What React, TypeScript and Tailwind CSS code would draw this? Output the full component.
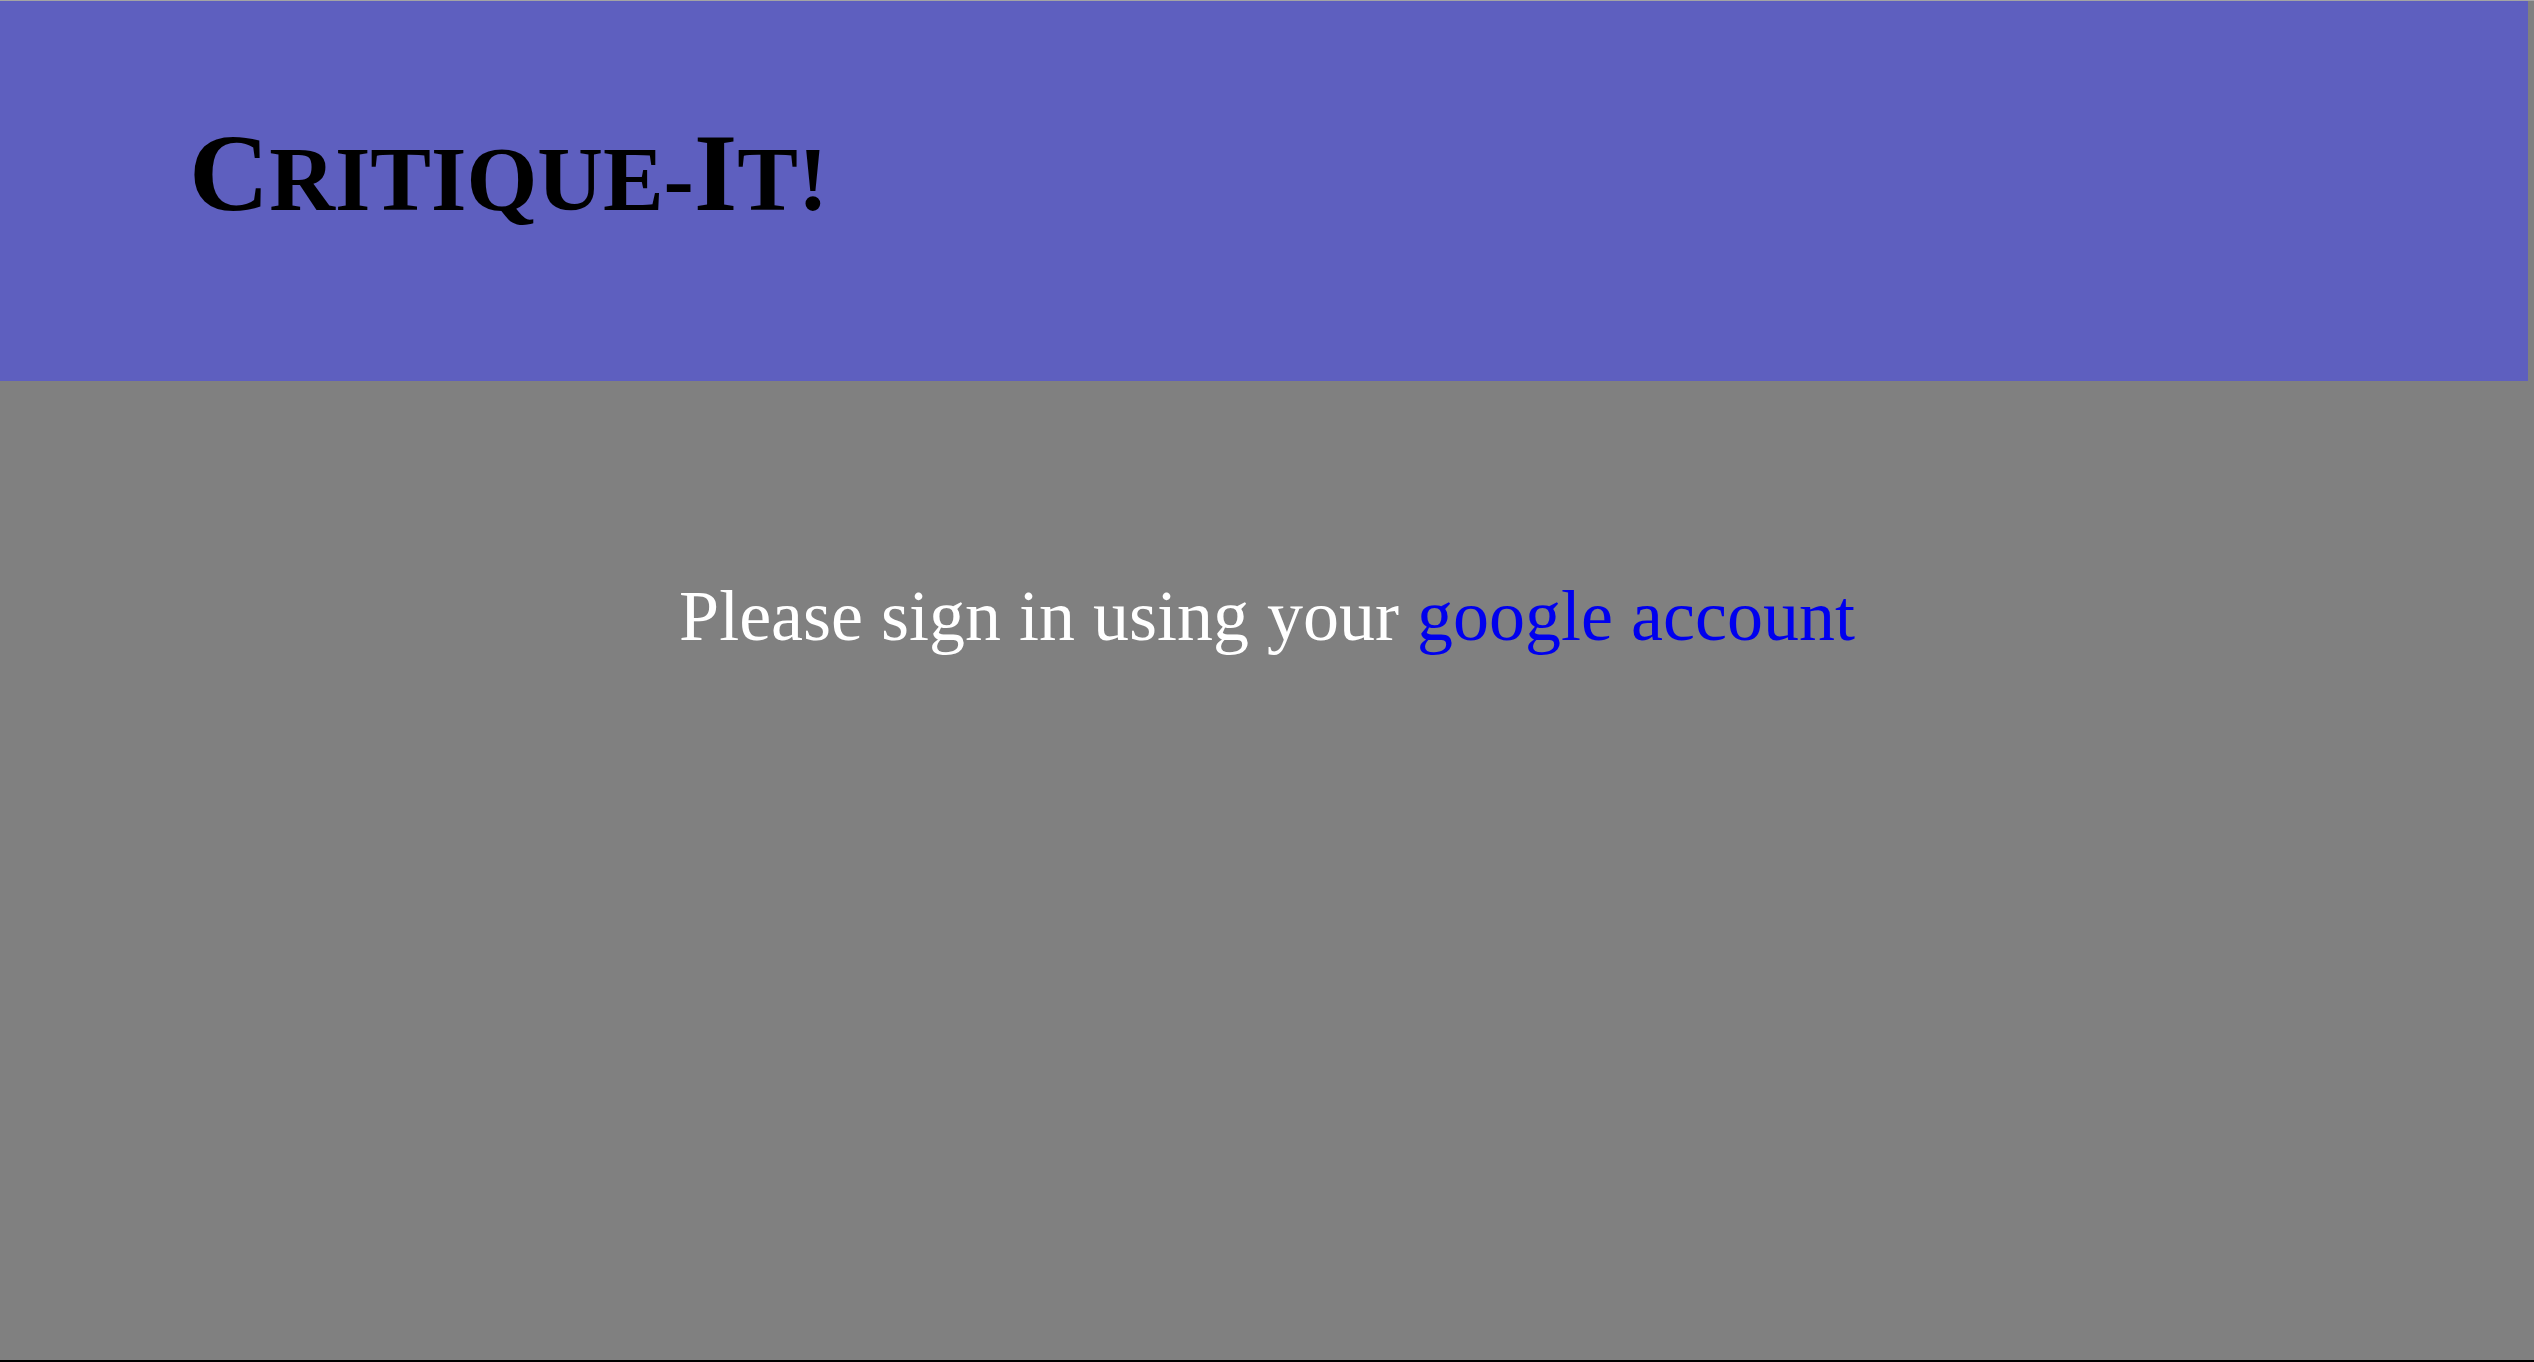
export default function App() {
  return (
    <div className="flex flex-col h-[1362px] bg-[#808080] border-t border-[#a4a4a4] border-b-2 border-b-black overflow-hidden">
      {/* Header bar */}
      <header className="mr-[6px] h-[380px] shrink-0 bg-[#5e5fbf] pl-[189px] pt-[116px]">
        <h1
          className="leading-none font-bold text-black whitespace-nowrap"
          style={{ fontFamily: '"Liberation Serif", serif' }}
        >
          <span className="text-[111px]">C</span>
          <span className="text-[91px] uppercase">ritique-</span>
          <span className="text-[111px]">I</span>
          <span className="text-[91px] uppercase">t!</span>
        </h1>
      </header>

      {/* Sign-in message */}
      <main className="flex-1 flex justify-center pt-[199px]">
        <p
          className="text-[72px] leading-none text-white whitespace-nowrap"
          style={{ fontFamily: '"Liberation Serif", serif' }}
        >
          Please sign in using your{" "}
          <a href="#" className="text-[#0000ee]">
            google account
          </a>
        </p>
      </main>
    </div>
  );
}
